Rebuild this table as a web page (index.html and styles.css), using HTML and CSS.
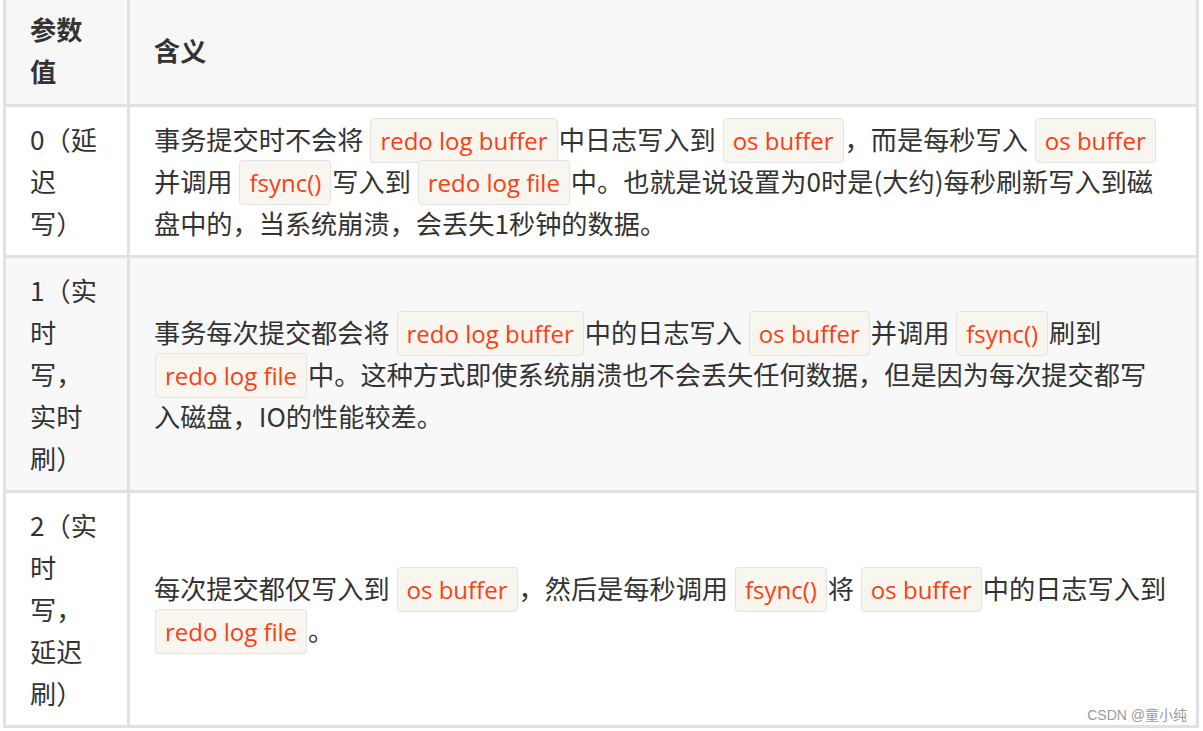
FILE: index.html
```html
<!DOCTYPE html>
<html lang="zh-CN">
<head>
<meta charset="utf-8">
<title>innodb_flush_log_at_trx_commit</title>
<link rel="stylesheet" href="styles.css">
</head>
<body>
<div class="page">
  <table class="param-table">
    <thead>
      <tr>
        <th class="c1">参数值</th>
        <th class="c2">含义</th>
      </tr>
    </thead>
    <tbody>
      <tr class="odd">
        <td class="c1">0（延迟写）</td>
        <td class="c2">事务提交时不会将 <code>redo log buffer</code>中日志写入到 <code>os buffer</code>，而是每秒写入 <code>os buffer</code>并调用 <code>fsync()</code>写入到 <code>redo log file</code>中。也就是说设置为0时是(大约)每秒刷新写入到磁盘中的，当系统崩溃，会丢失1秒钟的数据。</td>
      </tr>
      <tr class="even">
        <td class="c1">1（实时写，实时刷）</td>
        <td class="c2">事务每次提交都会将 <code>redo log buffer</code>中的日志写入 <code>os buffer</code>并调用 <code>fsync()</code>刷到 <code>redo log file</code>中。这种方式即使系统崩溃也不会丢失任何数据，但是因为每次提交都写入磁盘，IO的性能较差。</td>
      </tr>
      <tr class="odd">
        <td class="c1">2（实时写，延迟刷）</td>
        <td class="c2">每次提交都仅写入到 <code>os buffer</code>，然后是每秒调用 <code>fsync()</code>将 <code>os buffer</code>中的日志写入到 <code>redo log file</code>。</td>
      </tr>
    </tbody>
  </table>
  <div class="watermark">CSDN @童小纯</div>
</div>
</body>
</html>
```

FILE: styles.css
```css
html, body {
  margin: 0;
  padding: 0;
  background: #ffffff;
}

.page {
  position: relative;
  width: 1203px;
  height: 731px;
  overflow: hidden;
}

.param-table {
  margin: -3px 0 0 3px;
  width: 1196px;
  table-layout: fixed;
  border-collapse: separate;
  border-spacing: 0;
  border-left: 3px solid #dfe2e5;
  border-top: 3px solid #dfe2e5;
  font-family: "Noto Sans CJK SC", "Noto Sans", sans-serif;
  font-size: 26.2px;
  line-height: 42px;
  color: #333333;
  text-spacing-trim: space-all;
}

.param-table th,
.param-table td {
  border-right: 3px solid #dfe2e5;
  border-bottom: 3px solid #dfe2e5;
  padding: 11px 26px 11px 24px;
  vertical-align: middle;
  text-align: left;
}

.param-table th {
  padding: 8px 26px 12px 24px;
  font-weight: 700;
  background: #f7f7f7;
}

.param-table .c1 {
  width: 71px;
}

.param-table tr.odd td {
  background: #ffffff;
}

.param-table tr.even td {
  background: #f8f8f8;
}

.param-table code {
  font-family: "Open Sans", "Noto Sans", sans-serif;
  font-size: 24px;
  line-height: 1;
  white-space: nowrap;
  color: #fd3d12;
  background: #f9f6ef;
  border: 1px solid #e3e3e3;
  border-radius: 4px;
  padding: 5px 9px;
  margin: 0 1px;
}

.watermark {
  position: absolute;
  right: 16px;
  bottom: 8px;
  font-family: "Liberation Sans", "Noto Sans CJK SC", sans-serif;
  font-size: 14px;
  line-height: 16px;
  color: #9a9a9a;
}
```
